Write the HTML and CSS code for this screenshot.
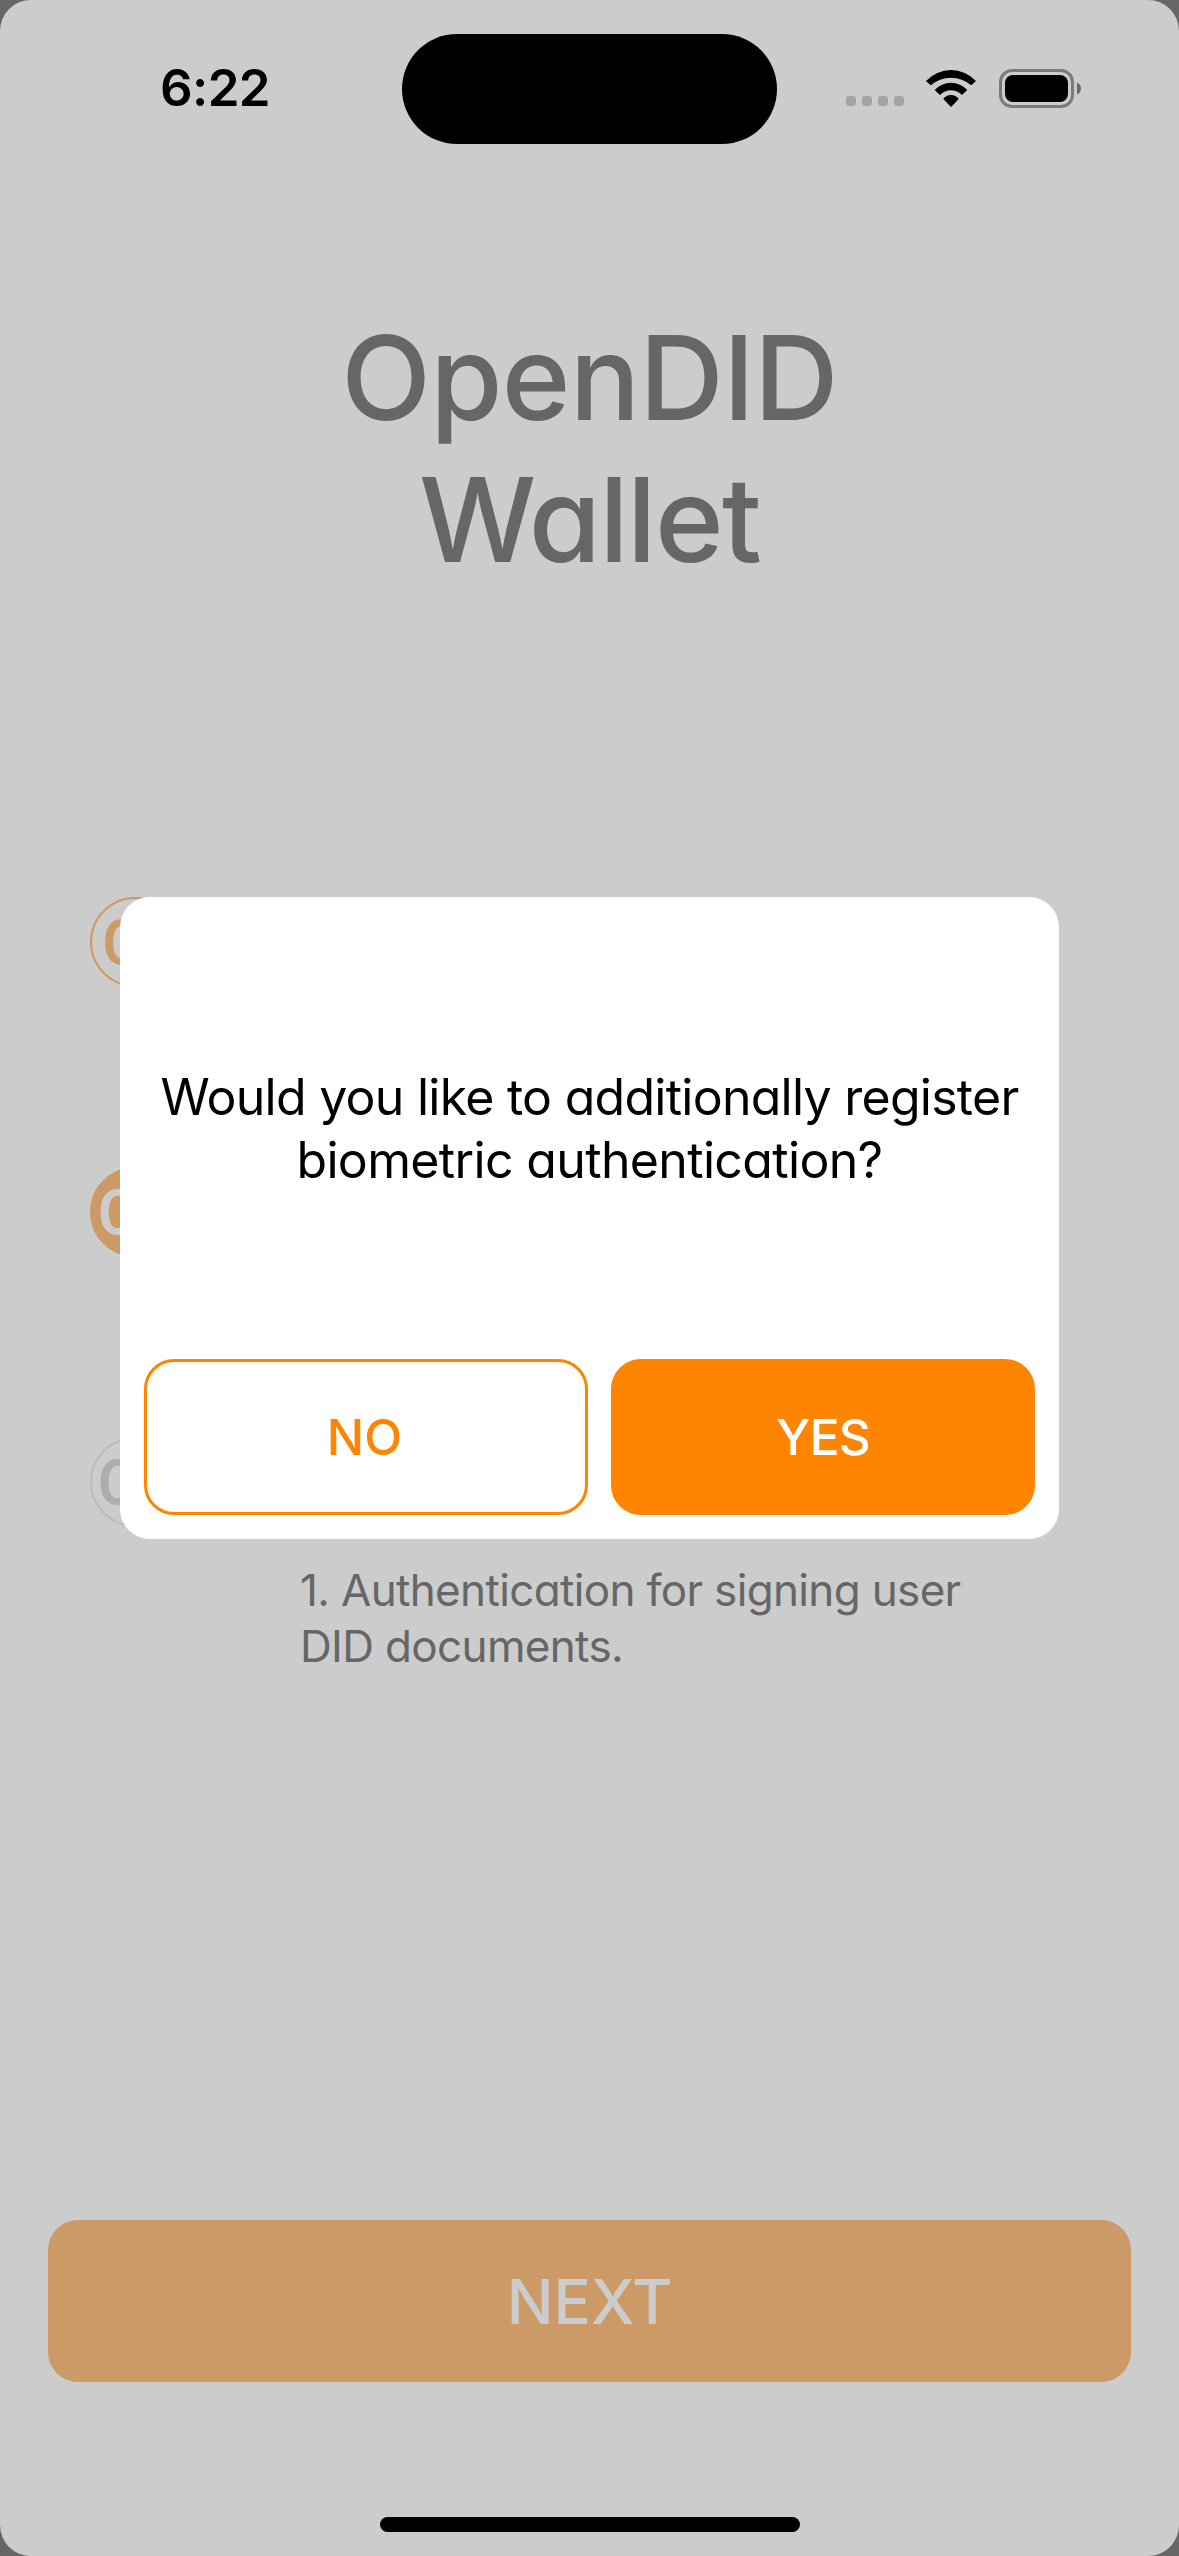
FILE: index.html
```html
<!DOCTYPE html>
<html lang="en">
<head>
<meta charset="utf-8">
<title>OpenDID Wallet</title>
<link rel="stylesheet" href="styles.css">
</head>
<body>
<div class="screen">
  <header class="status">
    <div class="status-time">6:22</div>
    <div class="island"></div>
    <div class="status-icons">
      <div class="dots"><i></i><i></i><i></i><i></i></div>
      <svg class="wifi" viewBox="0 0 50 37" width="50" height="37">
        <path d="M0 11A34 34 0 0 1 50 11L45.3 15.3A31 31 0 0 0 4.7 15.3Z"/>
        <path d="M8.7 20A22 22 0 0 1 41.3 20L36 25A15.2 15.2 0 0 0 14 25Z"/>
        <path d="M17.3 29A9.4 9.4 0 0 1 32.7 29L25 37Z"/>
      </svg>
      <svg class="battery" viewBox="0 0 82 39" width="82" height="39">
        <rect x="1.5" y="1.5" width="72" height="36" rx="11.5" fill="none" stroke="#7a7a7a" stroke-width="3"/>
        <rect x="6" y="6" width="63" height="27" rx="8" fill="#000"/>
        <path d="M78 13.5Q82 15.5 82 19.5T78 25.500Z" fill="#6a6a6a"/>
      </svg>
    </div>
  </header>

  <h1 class="title"><span class="title-a">OpenDID</span><br><span class="title-b">Wallet</span></h1>

  <ol class="steps">
    <li class="step step-done">01</li>
    <li class="step step-current">02</li>
    <li class="step step-pending">03</li>
  </ol>
  <p class="description">1. Authentication for signing user<br>DID documents.</p>

  <button class="next">NEXT</button>
  <div class="home-bar"></div>

  <div class="overlay">
    <section class="modal">
      <p class="modal-text"><span class="ask-a">Would you like to additionally register</span><br><span class="ask-b">biometric authentication?</span></p>
      <div class="modal-actions">
        <button class="action action-no">NO</button>
        <button class="action action-yes">YES</button>
      </div>
    </section>
  </div>
</div>
</body>
</html>
```
FILE: styles.css
```css
* { box-sizing: border-box; }

body {
  margin: 0;
  background: #666;
  font-family: Inter, "Liberation Sans", sans-serif;
  font-feature-settings: "cv11" 1;
}

button {
  font: inherit;
  font-feature-settings: inherit;
  border: 0;
  padding: 0;
}

.screen {
  position: relative;
  display: flex;
  flex-direction: column;
  width: 1179px;
  height: 2556px;
  border-radius: 31px;
  background: #ccc;
  overflow: hidden;
}

.status {
  display: grid;
  grid-template-columns: 402px 375px 402px;
  align-items: center;
  height: 111px;
  margin-top: 33px;
}

.status-time {
  padding-left: 160px;
  font-size: 51px;
  font-weight: 600;
  letter-spacing: -0.6px;
  line-height: 60px;
  padding-bottom: 2px;
}

.island {
  height: 110px;
  margin-top: 1px;
  border-radius: 55px;
  background: #000;
}

.status-icons {
  display: flex;
  align-items: center;
  padding-left: 69px;
}

.dots {
  display: flex;
  gap: 6px;
  margin-top: 25px;
}

.dots i {
  width: 10px;
  height: 10px;
  border-radius: 3px;
  background: #a3a3a3;
}

.wifi { margin-left: 22px; margin-top: -1px; }
.battery { margin-left: 23px; margin-top: -1px; }

.title {
  margin: 163px 0 0;
  color: #666;
  font-size: 117px;
  font-weight: 540;
  line-height: 142px;
  text-align: center;
}

.title-a { letter-spacing: -0.8px; }
.title-b { letter-spacing: -1.7px; }

.steps {
  display: flex;
  flex-direction: column;
  gap: 180px;
  margin: 306px 0 0;
  padding: 0 0 0 90px;
  list-style: none;
}

.step {
  display: flex;
  align-items: center;
  justify-content: center;
  width: 90px;
  height: 90px;
  border: 2px solid;
  border-radius: 50%;
  font-size: 61px;
  font-weight: 600;
}

.step-done { color: #cc9a66; }
.step-current { border-color: #cc9a66; background: #cc9a66; color: #ccc; letter-spacing: -1.5px; }
.step-pending { border-color: #bbb; color: #adadad; letter-spacing: -2px; }

.description {
  margin: 35px 0 0 300px;
  color: #666;
  font-size: 44px;
  font-weight: 370;
  line-height: 56px;
  letter-spacing: -0.66px;
}

.next {
  height: 162px;
  margin: auto 48px 135px;
  border-radius: 30px;
  background: #cc9a66;
  color: #ccc;
  font-size: 62px;
  font-weight: 550;
}

.home-bar {
  width: 420px;
  height: 15px;
  margin: 0 auto 24px;
  border-radius: 8px;
  background: #000;
}

.overlay {
  position: absolute;
  inset: 0;
  display: flex;
  flex-direction: column;
  align-items: center;
  padding-top: 897px;
}

.modal {
  width: 939px;
  height: 642px;
  padding: 169px 24px 24px;
  border-radius: 30px;
  background: #fff;
}

.modal-text {
  margin: 0 -24px 167px;
  font-size: 50px;
  font-weight: 370;
  line-height: 63px;
  text-align: center;
  white-space: nowrap;
}

.ask-a { letter-spacing: -0.74px; }
.ask-b { letter-spacing: -0.65px; }

.modal-actions {
  display: grid;
  grid-template-columns: 444px 424px;
  gap: 23px;
}

.action {
  height: 156px;
  border: 3px solid #ff8400;
  border-radius: 30px;
  font-size: 49.5px;
  font-weight: 550;
}

.action-no { background: #fff; color: #ff8400; padding-right: 3px; }
.action-yes { background: #ff8400; color: #fff; letter-spacing: -0.7px; }
```
